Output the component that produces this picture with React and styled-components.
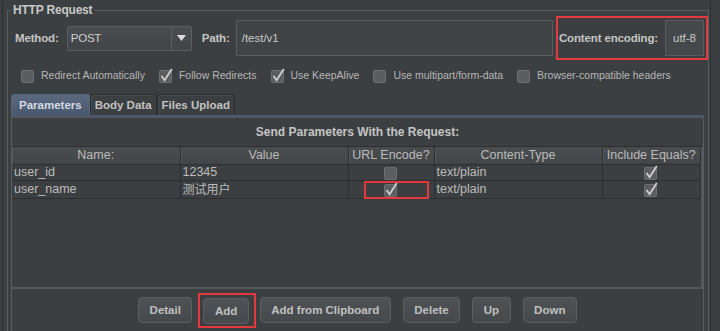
import React from 'react';
import styled, { createGlobalStyle } from 'styled-components';

const FONT = `"Liberation Sans", Arial, sans-serif`;

const GlobalStyle = createGlobalStyle`
  html, body {
    margin: 0;
    padding: 0;
    background: #3c3f41;
  }
  body {
    width: 720px;
    height: 331px;
    overflow: hidden;
    font-family: ${FONT};
    color: #bbbbbb;
  }
  * {
    box-sizing: border-box;
  }
`;

const Frame = styled.div`
  width: 709px;
  height: 331px;
  margin-left: 2px;
  padding: 4px 1px 0 4px;
  border-left: 1px solid #2e3032;
  border-right: 1px solid #2e3032;
  overflow: hidden;
`;

const Group = styled.fieldset`
  margin: 0;
  padding: 0;
  min-width: 0;
  width: 702px;
  height: 345px;
  border: 1px solid #5b5e60;
`;

const Legend = styled.legend`
  margin-left: 3px;
  padding: 0 2px;
  font-size: 12px;
  font-weight: bold;
  line-height: 12px;
  letter-spacing: -0.2px;
  color: #c8c8c8;
`;

const TopRow = styled.div`
  display: flex;
  align-items: center;
  height: 44px;
  padding-left: 7px;
`;

const FieldLabel = styled.span`
  margin-left: ${(p) => p.$left || 0}px;
  margin-right: ${(p) => p.$right || 0}px;
  font-size: 11.5px;
  font-weight: bold;
  letter-spacing: -0.15px;
  color: #c4c4c4;
  white-space: nowrap;
`;

const Select = styled.div`
  display: flex;
  width: 125px;
  height: 25px;
  border: 1px solid #5c5f61;
  border-radius: 2px;
  background: linear-gradient(#4a4d4f, #424547);
`;

const SelectValue = styled.span`
  flex: 1;
  padding-left: 3px;
  font-size: 11.5px;
  line-height: 23px;
  letter-spacing: -0.2px;
  color: #d0d0d0;
`;

const SelectArrow = styled.span`
  display: flex;
  align-items: center;
  justify-content: center;
  width: 20px;
  border-left: 1px solid #5c5f61;
`;

const TextInput = styled.div`
  flex: 1;
  height: 36px;
  margin-left: 6px;
  padding-left: 5px;
  border: 1px solid #5a5d5f;
  background: #414446;
  font-size: 11.5px;
  line-height: 34px;
  color: #c8c8c8;
`;

const Annotation = styled.div`
  border: 2px solid #e2393c;
`;

const EncodingBox = styled(Annotation)`
  display: flex;
  align-items: center;
  gap: 7px;
  height: 44px;
  margin-left: 3px;
  padding: 0 2px 0 1px;
`;

const SmallInput = styled.div`
  width: 39px;
  height: 36px;
  border: 1px solid #5a5d5f;
  background: #45484a;
  font-size: 11.5px;
  line-height: 34px;
  text-align: center;
  color: #c8c8c8;
`;

const CheckRow = styled.div`
  display: flex;
  align-items: center;
  gap: 14px;
  height: 16px;
  margin-top: 7px;
  padding-left: 13px;
`;

const CheckItem = styled.span`
  display: flex;
  align-items: center;
  gap: 6px;
  font-size: 10.5px;
  color: #b6b6b6;
  white-space: nowrap;
`;

const TabStrip = styled.div`
  display: flex;
  height: 21px;
  margin: 11px 0 0 3px;
`;

const Tab = styled.div`
  padding: 0 ${(p) => (p.$active ? 7 : 4)}px;
  border: 1px solid ${(p) => (p.$active ? '#56647a' : '#2b2d2f')};
  border-bottom: none;
  border-radius: 3px 3px 0 0;
  background: ${(p) =>
    p.$active ? 'linear-gradient(#5a6980, #4a586e)' : '#3c3f41'};
  box-shadow: ${(p) => (p.$active ? 'none' : 'inset 1px 1px 0 #4a4d50')};
  font-size: 11.5px;
  font-weight: bold;
  line-height: 20px;
  color: ${(p) => (p.$active ? '#d4dae2' : '#c2c2c2')};
  white-space: nowrap;
`;

const TabPanel = styled.div`
  height: 240px;
  margin: 0 4px 0 3px;
  border-top: 2px solid #4b596f;
  border-left: 1px solid #5a5d5f;
  border-right: 1px solid #5a5d5f;
`;

const ParamBox = styled.div`
  display: flex;
  flex-direction: column;
  height: 172px;
  border-top: 1px solid #55585a;
  border-bottom: 2px solid #55585a;
`;

const BoxTitle = styled.div`
  height: 28px;
  font-size: 12px;
  font-weight: bold;
  line-height: 28px;
  text-align: center;
  color: #c4c4c4;
`;

const ScrollPane = styled.div`
  flex: 1;
  border-top: 1px solid #2c2e30;
  border-right: 2px solid #55585a;
`;

const Grid = styled.table`
  width: 100%;
  border-collapse: collapse;
  table-layout: fixed;
`;

const HeadCell = styled.th`
  width: ${(p) => (p.$w ? `${p.$w}px` : 'auto')};
  height: 17px;
  padding: 0;
  border-right: 1px solid #2c2e30;
  border-bottom: 1px solid #2c2e30;
  box-shadow: inset 1px 0 0 #55585a;
  background: linear-gradient(#4a4d4f, #434648);
  font-size: 12.5px;
  font-weight: normal;
  line-height: 16px;
  color: #bbbbbb;
  text-align: center;
  white-space: nowrap;
`;

const Cell = styled.td`
  position: relative;
  height: 16px;
  padding: 0 0 0 ${(p) => (p.$center ? 0 : 2)}px;
  border-right: 1px solid #2c2e30;
  border-bottom: 1px solid #2c2e30;
  font-size: 12.5px;
  line-height: 15px;
  color: #bcbcbc;
  text-align: ${(p) => (p.$center ? 'center' : 'left')};
  white-space: nowrap;
  overflow: visible;
`;

const CellBox = styled.span`
  display: inline-flex;
  vertical-align: middle;
`;

const Cjk = styled.span`
  font-family: "Noto Sans CJK SC", sans-serif;
  font-size: 12px;
`;

const CellMark = styled(Annotation)`
  position: absolute;
  top: 0;
  left: 15px;
  width: 65px;
  height: 18px;
`;

const ButtonBar = styled.div`
  display: flex;
  align-items: center;
  justify-content: center;
  gap: 12px;
  height: 42px;
`;

const Button = styled.button`
  height: 26px;
  padding: 0 10.5px;
  border: 1px solid #5b5f62;
  border-radius: 4px;
  background: linear-gradient(#4e5254, #46494b);
  font-family: ${FONT};
  font-size: 11.5px;
  font-weight: bold;
  color: #c0c0c0;
`;

const ButtonMark = styled(Annotation)`
  margin: 0 -8px 0 -6px;
  padding: 3px 5px 2px 3px;
`;

const CheckBox = ({ checked }) => (
  <svg width="14" height="15" viewBox="0 0 14 15">
    <rect x="0.5" y="2.5" width="12" height="12" rx="1" fill="#5b5e60" stroke="#6d7072" />
    {checked && (
      <path d="M2.5 8 L5.6 12.2 L12.8 1" fill="none" stroke="#d0d0d0" strokeWidth="1.8" />
    )}
  </svg>
);

const options = [
  ['Redirect Automatically', false],
  ['Follow Redirects', true],
  ['Use KeepAlive', true],
  ['Use multipart/form-data', false],
  ['Browser-compatible headers', false],
];

const params = [
  { name: 'user_id', value: '12345', encode: false, type: 'text/plain', equals: true },
  { name: 'user_name', value: '测试用户', cjk: true, encode: true, mark: true, type: 'text/plain', equals: true },
];

const App = () => {
  return (
    <>
      <GlobalStyle />
      <Frame>
        <Group>
          <Legend>HTTP Request</Legend>
          <TopRow>
            <FieldLabel $right={8}>Method:</FieldLabel>
            <Select>
              <SelectValue>POST</SelectValue>
              <SelectArrow>
                <svg width="9" height="6" viewBox="0 0 9 6">
                  <path d="M0 0 H9 L4.5 6 Z" fill="#dcdcdc" />
                </svg>
              </SelectArrow>
            </Select>
            <FieldLabel $left={10}>Path:</FieldLabel>
            <TextInput>/test/v1</TextInput>
            <EncodingBox>
              <FieldLabel>Content encoding:</FieldLabel>
              <SmallInput>utf-8</SmallInput>
            </EncodingBox>
          </TopRow>

          <CheckRow>
            {options.map(([label, on]) => (
              <CheckItem key={label}>
                <CheckBox checked={on} />
                {label}
              </CheckItem>
            ))}
          </CheckRow>

          <TabStrip>
            <Tab $active>Parameters</Tab>
            <Tab>Body Data</Tab>
            <Tab>Files Upload</Tab>
          </TabStrip>

          <TabPanel>
            <ParamBox>
              <BoxTitle>Send Parameters With the Request:</BoxTitle>
              <ScrollPane>
                <Grid>
                  <thead>
                    <tr>
                      <HeadCell $w={168}>Name:</HeadCell>
                      <HeadCell $w={168}>Value</HeadCell>
                      <HeadCell $w={86}>URL Encode?</HeadCell>
                      <HeadCell $w={168}>Content-Type</HeadCell>
                      <HeadCell>Include Equals?</HeadCell>
                    </tr>
                  </thead>
                  <tbody>
                    {params.map((p) => (
                      <tr key={p.name}>
                        <Cell>{p.name}</Cell>
                        <Cell>{p.cjk ? <Cjk>{p.value}</Cjk> : p.value}</Cell>
                        <Cell $center>
                          <CellBox>
                            <CheckBox checked={p.encode} />
                          </CellBox>
                          {p.mark && <CellMark />}
                        </Cell>
                        <Cell>{p.type}</Cell>
                        <Cell $center>
                          <CellBox>
                            <CheckBox checked={p.equals} />
                          </CellBox>
                        </Cell>
                      </tr>
                    ))}
                  </tbody>
                </Grid>
              </ScrollPane>
            </ParamBox>

            <ButtonBar>
              <Button>Detail</Button>
              <ButtonMark>
                <Button>Add</Button>
              </ButtonMark>
              <Button>Add from Clipboard</Button>
              <Button>Delete</Button>
              <Button>Up</Button>
              <Button>Down</Button>
            </ButtonBar>
          </TabPanel>
        </Group>
      </Frame>
    </>
  );
};

export default App;
